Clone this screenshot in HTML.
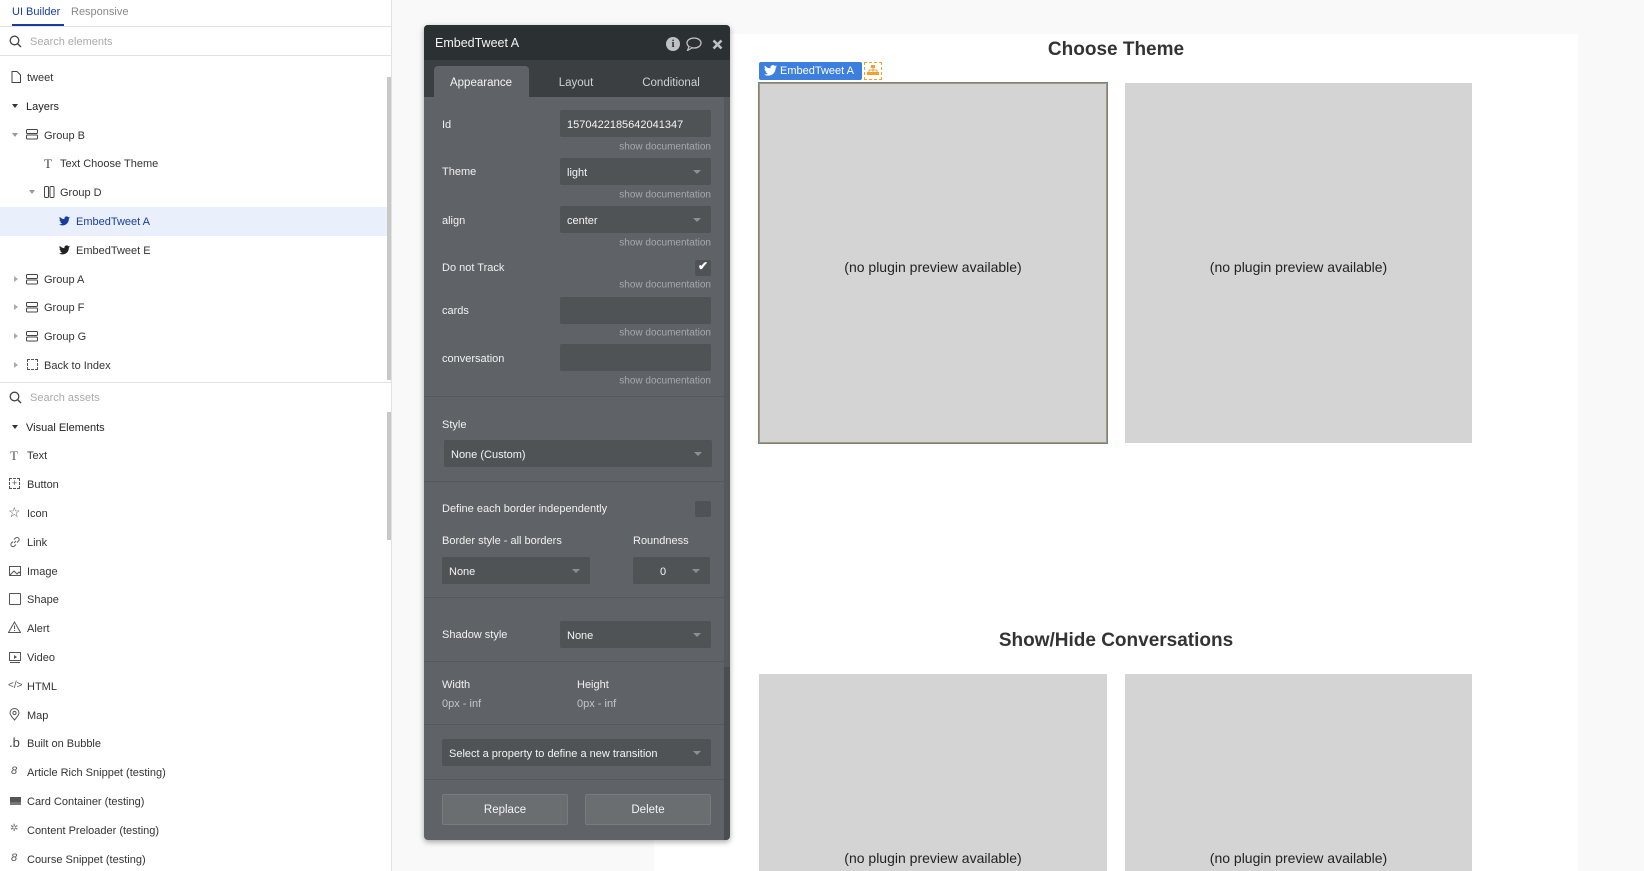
<!DOCTYPE html>
<html><head><meta charset="utf-8"><style>
*{margin:0;padding:0;box-sizing:border-box}
body{width:1644px;height:871px;overflow:hidden;background:#f9f9f9;font-family:"Liberation Sans",sans-serif;position:relative}
.a{position:absolute;white-space:nowrap}
#side{position:absolute;left:0;top:0;width:392px;height:871px;background:#fff;border-right:1px solid #e2e2e2}
.t{font-size:11px;color:#333;transform:translateY(-50%);margin-top:1px}
.pl{font-size:11px;color:#f1f1f1;transform:translateY(-50%);margin-top:1px}
.doc{font-size:10px;color:#a6aaad;transform:translateY(-50%);text-align:right;margin-top:1px}
.in{position:absolute;background:#4f5356;border-radius:2px}
.dd:after{content:"";position:absolute;right:10px;top:50%;margin-top:-2px;border-left:4px solid transparent;border-right:4px solid transparent;border-top:4px solid #8c9093}
.in span{position:absolute;left:7px;top:50%;transform:translateY(-50%);font-size:11px;color:#f4f4f4;white-space:nowrap;margin-top:1px}
.sep{position:absolute;left:424px;width:300px;height:1px;background:#55595c}
.box{position:absolute;background:#d4d4d4;font-family:"Liberation Sans",Arial,sans-serif;font-size:14px;color:#222}
.box span{position:absolute;left:0;right:0;text-align:center;transform:translateY(-50%)}
.h{font-size:19px;font-weight:bold;color:#333;transform:translate(-50%,-50%);margin-top:1px}
</style></head><body>
<div id="side">
 <div class="a" style="left:12px;top:6px;font-size:11px;color:#1a3ca0">UI Builder</div>
 <div class="a" style="left:71px;top:6px;font-size:11px;color:#888">Responsive</div>
 <div class="a" style="left:12px;top:24px;width:52px;height:2px;background:#1a3ca0"></div>
 <div class="a" style="left:0;top:26px;width:392px;height:1px;background:#e2e2e2"></div>
 <svg class="a" style="left:9px;top:35px" width="13" height="13" viewBox="0 0 13 13"><circle cx="5.5" cy="5.5" r="4.3" fill="none" stroke="#444" stroke-width="1.3"/><path d="M8.7 8.7L12 12" stroke="#444" stroke-width="1.4"/></svg>
 <div class="a t" style="left:30px;top:41px;color:#aaa">Search elements</div>
 <div class="a" style="left:0;top:55px;width:392px;height:1px;background:#e2e2e2"></div>
 <div class="a" style="left:387px;top:77px;width:4px;height:303px;background:#c8c8c8"></div>
 <div class="a" style="left:0;top:207px;width:387px;height:29px;background:#e9f0fc"></div>
 <svg class="a" style="left:11px;top:71px" width="10" height="12"><path d="M1 .5h5l3.5 3.5v7.5H1z" fill="none" stroke="#444"/></svg>
 <div class="a t" style="left:27px;top:77px">tweet</div>
 <div class="a" style="left:12px;top:104px;border-left:3.5px solid transparent;border-right:3.5px solid transparent;border-top:4px solid #333"></div>
 <div class="a t" style="left:26px;top:106px;color:#222">Layers</div>
 <div class="a" style="left:12px;top:133px;border-left:3.5px solid transparent;border-right:3.5px solid transparent;border-top:4px solid #999"></div>
 <svg class="a" style="left:26px;top:129px" width="12" height="11"><rect x=".5" y=".5" width="11" height="4" rx="1" fill="none" stroke="#444"/><rect x=".5" y="6" width="11" height="4" rx="1" fill="none" stroke="#444"/></svg>
 <div class="a t" style="left:44px;top:135px">Group B</div>
 <div class="a" style="left:44px;top:156px;font-size:13px;color:#444;font-family:'Liberation Serif',serif">T</div>
 <div class="a t" style="left:60px;top:163px">Text Choose Theme</div>
 <div class="a" style="left:29px;top:190px;border-left:3.5px solid transparent;border-right:3.5px solid transparent;border-top:4px solid #999"></div>
 <svg class="a" style="left:44px;top:186px" width="11" height="12"><rect x=".5" y=".5" width="4" height="11" rx="1" fill="none" stroke="#444"/><rect x="6" y=".5" width="4" height="11" rx="1" fill="none" stroke="#444"/></svg>
 <div class="a t" style="left:60px;top:192px">Group D</div>
 <svg class="a" style="left:59px;top:216px" width="11" height="10" viewBox="0 0 24 20"><path d="M24 2.4c-.9.4-1.8.7-2.8.8 1-.6 1.8-1.6 2.2-2.7-1 .6-2 1-3.1 1.2C19.4.7 18.1 0 16.6 0c-2.7 0-4.900 2.2-4.9 4.9 0 .4 0 .8.1 1.1C7.7 5.8 4.1 3.9 1.7.9c-.4.7-.7 1.6-.7 2.5 0 1.7.9 3.2 2.2 4.1-.8 0-1.6-.2-2.2-.6v.1c0 2.4 1.7 4.4 3.9 4.8-.4.1-.8.2-1.3.2-.3 0-.6 0-.9-.1.6 2 2.4 3.4 4.6 3.4-1.7 1.3-3.8 2.1-6.1 2.1-.4 0-.8 0-1.2-.1 2.2 1.4 4.8 2.200 7.5 2.2 9.1 0 14-7.5 14-14v-.6c1-.7 1.8-1.6 2.5-2.5z" fill="#1a3ca0"/></svg>
 <div class="a t" style="left:76px;top:221px;color:#1a3ca0">EmbedTweet A</div>
 <svg class="a" style="left:59px;top:245px" width="11" height="10" viewBox="0 0 24 20"><path d="M24 2.4c-.9.4-1.8.7-2.8.8 1-.6 1.8-1.6 2.2-2.7-1 .6-2 1-3.1 1.2C19.4.7 18.1 0 16.6 0c-2.7 0-4.9 2.2-4.9 4.9 0 .4 0 .8.1 1.1C7.7 5.8 4.1 3.9 1.7.9c-.4.7-.7 1.6-.7 2.5 0 1.7.9 3.2 2.2 4.1-.8 0-1.6-.2-2.2-.6v.1c0 2.4 1.7 4.4 3.9 4.8-.4.1-.8.2-1.3.2-.3 0-.6 0-.9-.1.6 2 2.4 3.4 4.6 3.4-1.7 1.3-3.8 2.1-6.1 2.1-.4 0-.8 0-1.2-.1 2.2 1.4 4.8 2.2 7.5 2.2 9.1 0 14-7.5 14-14v-.6c1-.7 1.8-1.6 2.5-2.5z" fill="#222"/></svg>
 <div class="a t" style="left:76px;top:250px">EmbedTweet E</div>
 <div class="a" style="left:14px;top:276px;border-top:3.5px solid transparent;border-bottom:3.5px solid transparent;border-left:4px solid #aaa"></div>
 <svg class="a" style="left:26px;top:274px" width="12" height="11"><rect x=".5" y=".5" width="11" height="4" rx="1" fill="none" stroke="#444"/><rect x=".5" y="6" width="11" height="4" rx="1" fill="none" stroke="#444"/></svg>
 <div class="a t" style="left:44px;top:279px">Group A</div>
 <div class="a" style="left:14px;top:304px;border-top:3.5px solid transparent;border-bottom:3.5px solid transparent;border-left:4px solid #aaa"></div>
 <svg class="a" style="left:26px;top:302px" width="12" height="11"><rect x=".5" y=".5" width="11" height="4" rx="1" fill="none" stroke="#444"/><rect x=".5" y="6" width="11" height="4" rx="1" fill="none" stroke="#444"/></svg>
 <div class="a t" style="left:44px;top:307px">Group F</div>
 <div class="a" style="left:14px;top:333px;border-top:3.5px solid transparent;border-bottom:3.5px solid transparent;border-left:4px solid #aaa"></div>
 <svg class="a" style="left:26px;top:331px" width="12" height="11"><rect x=".5" y=".5" width="11" height="4" rx="1" fill="none" stroke="#444"/><rect x=".5" y="6" width="11" height="4" rx="1" fill="none" stroke="#444"/></svg>
 <div class="a t" style="left:44px;top:336px">Group G</div>
 <div class="a" style="left:14px;top:362px;border-top:3.5px solid transparent;border-bottom:3.5px solid transparent;border-left:4px solid #aaa"></div>
 <div class="a" style="left:27px;top:359px;width:11px;height:11px;border:1px dashed #555"></div>
 <div class="a t" style="left:44px;top:365px">Back to Index</div>
 <div class="a" style="left:0;top:382px;width:392px;height:1px;background:#e2e2e2"></div>
 <svg class="a" style="left:9px;top:391px" width="13" height="13" viewBox="0 0 13 13"><circle cx="5.5" cy="5.5" r="4.3" fill="none" stroke="#444" stroke-width="1.3"/><path d="M8.7 8.7L12 12" stroke="#444" stroke-width="1.4"/></svg>
 <div class="a t" style="left:30px;top:397px;color:#aaa">Search assets</div>
 <div class="a" style="left:387px;top:412px;width:4px;height:128px;background:#c8c8c8"></div>
 <div class="a" style="left:12px;top:425px;border-left:3.5px solid transparent;border-right:3.5px solid transparent;border-top:4px solid #333"></div>
 <div class="a t" style="left:26px;top:427px;color:#222">Visual Elements</div>
 <div class="a" style="left:10px;top:448px;font-size:13px;color:#555;font-family:'Liberation Serif',serif">T</div>
 <div class="a t" style="left:27px;top:455px">Text</div>
 <div class="a" style="left:9px;top:478px;width:11px;height:11px;border:1px dashed #555;font-size:9px;line-height:9px;text-align:center;color:#555">+</div>
 <div class="a t" style="left:27px;top:484px">Button</div>
 <div class="a" style="left:8px;top:504px;font-size:14px;color:#555">☆</div>
 <div class="a t" style="left:27px;top:513px">Icon</div>
 <svg class="a" style="left:9px;top:536px" width="12" height="12"><path d="M5 7l2-2M4 5.5L2.5 7a2 2 0 003 3L7 8.5M8 6.5L9.5 5a2 2 0 00-3-3L5 3.5" fill="none" stroke="#666" stroke-width="1.1"/></svg>
 <div class="a t" style="left:27px;top:542px">Link</div>
 <svg class="a" style="left:9px;top:566px" width="12" height="10"><rect x=".5" y=".5" width="11" height="9" fill="none" stroke="#555"/><path d="M1 9l4-4 3 3 2-2 2 2" fill="none" stroke="#555"/></svg>
 <div class="a t" style="left:27px;top:571px">Image</div>
 <div class="a" style="left:9px;top:593px;width:12px;height:12px;border:1px solid #555;border-radius:1px"></div>
 <div class="a t" style="left:27px;top:599px">Shape</div>
 <svg class="a" style="left:8px;top:621px" width="13" height="12"><path d="M6.5 1L12.5 11.5H.5z" fill="none" stroke="#555"/><path d="M6.5 4.5v3.5M6.5 9v1" stroke="#555"/></svg>
 <div class="a t" style="left:27px;top:628px">Alert</div>
 <svg class="a" style="left:9px;top:652px" width="12" height="11"><rect x=".5" y=".5" width="11" height="8" fill="none" stroke="#555"/><path d="M5 3v4l3-2z" fill="#555"/><path d="M1 10.5h10" stroke="#555"/></svg>
 <div class="a t" style="left:27px;top:657px">Video</div>
 <div class="a" style="left:8px;top:680px;font-size:10px;color:#555">&lt;/&gt;</div>
 <div class="a t" style="left:27px;top:686px">HTML</div>
 <svg class="a" style="left:9px;top:708px" width="11" height="13"><path d="M5.5 12C2 8 1 6.5 1 5a4.5 4.5 0 019 0c0 1.5-1 3-4.5 7z" fill="none" stroke="#555"/><circle cx="5.5" cy="5" r="1.6" fill="none" stroke="#555"/></svg>
 <div class="a t" style="left:27px;top:715px">Map</div>
 <div class="a" style="left:9px;top:735px;font-size:13px;color:#444">.b</div>
 <div class="a t" style="left:27px;top:743px">Built on Bubble</div>
 <div class="a" style="left:11px;top:765px;font-size:11px;color:#555;font-style:italic">8</div>
 <div class="a t" style="left:27px;top:772px">Article Rich Snippet (testing)</div>
 <div class="a" style="left:10px;top:797px;width:11px;height:8px;background:#555;border-top:3px solid #555;box-shadow:inset 0 -3px 0 #777"></div>
 <div class="a t" style="left:27px;top:801px">Card Container (testing)</div>
 <div class="a" style="left:10px;top:823px;font-size:10px;color:#777">✲</div>
 <div class="a t" style="left:27px;top:830px">Content Preloader (testing)</div>
 <div class="a" style="left:11px;top:852px;font-size:11px;color:#555;font-style:italic">8</div>
 <div class="a t" style="left:27px;top:859px">Course Snippet (testing)</div>
</div>

<!-- canvas -->
<div class="a" style="left:654px;top:34px;width:924px;height:837px;background:#fff"></div>
<div class="a h" style="left:1116px;top:49px">Choose Theme</div>
<div class="a" style="left:759px;top:62px;width:103px;height:18px;background:#3d7fdf;border-radius:2px"></div>
<svg class="a" style="left:764px;top:65px" width="13" height="11" viewBox="0 0 24 20"><path d="M24 2.4c-.9.4-1.8.7-2.8.8 1-.6 1.8-1.6 2.2-2.7-1 .6-2 1-3.1 1.2C19.4.7 18.1 0 16.6 0c-2.7 0-4.9 2.2-4.9 4.9 0 .4 0 .8.1 1.1C7.7 5.8 4.1 3.9 1.7.9c-.4.7-.7 1.6-.7 2.5 0 1.7.9 3.2 2.2 4.1-.8 0-1.6-.2-2.2-.6v.1c0 2.4 1.7 4.4 3.900 4.8-.4.1-.8.2-1.3.2-.3 0-.6 0-.9-.1.6 2 2.4 3.4 4.6 3.4-1.7 1.3-3.8 2.1-6.1 2.1-.4 0-.8 0-1.2-.1 2.2 1.4 4.8 2.2 7.5 2.2 9.1 0 14-7.5 14-14v-.6c1-.7 1.8-1.6 2.5-2.5z" fill="#fff"/></svg>
<div class="a" style="left:780px;top:63px;font-size:11px;color:#fff;line-height:17px">EmbedTweet A</div>
<div class="a" style="left:864px;top:62px;width:18px;height:18px;border:1px dashed #f0a030"></div>
<svg class="a" style="left:867px;top:65px" width="12" height="11"><rect x="4" y="0" width="4" height="3" fill="#f0a030"/><path d="M6 3v2M2 5h8M2 5v2M10 5v2M6 5v2" stroke="#f0a030"/><rect x="0" y="7" width="4" height="3" fill="#f0a030"/><rect x="4" y="7" width="4" height="3" fill="#f0a030"/><rect x="8" y="7" width="4" height="3" fill="#f0a030"/></svg>
<div class="box" style="left:758px;top:82px;width:350px;height:362px;border:1px solid #3d8fe0;box-shadow:inset 0 0 0 1px #e88a1a"><span style="top:184px">(no plugin preview available)</span></div>
<div class="box" style="left:1125px;top:83px;width:347px;height:360px"><span style="top:184px">(no plugin preview available)</span></div>
<div class="a h" style="left:1116px;top:640px">Show/Hide Conversations</div>
<div class="box" style="left:759px;top:674px;width:348px;height:197px"><span style="top:184px">(no plugin preview available)</span></div>
<div class="box" style="left:1125px;top:674px;width:347px;height:197px"><span style="top:184px">(no plugin preview available)</span></div>

<!-- panel -->
<div class="a" style="left:424px;top:25px;width:306px;height:815px;background:#5f6367;border-radius:4px;box-shadow:0 2px 6px rgba(0,0,0,.35);overflow:hidden">
 <div class="a" style="left:0;top:0;width:306px;height:35px;background:#2b3033"></div>
 <div class="a" style="left:0;top:35px;width:306px;height:37px;background:#3b3f42"></div>
 <div class="a" style="left:300px;top:72px;width:6px;height:743px;background:#4a4e51"></div>
 <div class="a" style="left:300px;top:72px;width:6px;height:570px;background:#55595c"></div>
</div>
<div class="a" style="left:435px;top:35px;font-size:12.5px;color:#f4f4f4;transform:translateY(-50%);margin-top:8px">EmbedTweet A</div>
<div class="a" style="left:666px;top:37px;width:14px;height:14px;border-radius:50%;background:#bfc2c4;color:#2b3033;font-size:11px;font-weight:bold;text-align:center;line-height:14px;font-family:'Liberation Serif',serif">i</div>
<svg class="a" style="left:686px;top:37px" width="16" height="14"><ellipse cx="8" cy="6" rx="7" ry="5" fill="none" stroke="#bfc2c4" stroke-width="1.3"/><path d="M3 9.5L1.5 13.5 6 10.8" fill="#2b3033" stroke="#bfc2c4" stroke-width="1.2"/></svg>
<svg class="a" style="left:712px;top:39px" width="11" height="11"><path d="M1.5 1.5l8 8M9.5 1.5l-8 8" stroke="#bfc2c4" stroke-width="2.6"/></svg>
<div class="a" style="left:434px;top:66px;width:95px;height:31px;background:#5f6367;border-radius:4px 4px 0 0"></div>
<div class="a" style="left:481px;top:83px;font-size:11.5px;color:#f4f4f4;transform:translate(-50%,-50%)">Appearance</div>
<div class="a" style="left:576px;top:83px;font-size:11.5px;color:#cfd1d2;transform:translate(-50%,-50%)">Layout</div>
<div class="a" style="left:671px;top:83px;font-size:11.5px;color:#cfd1d2;transform:translate(-50%,-50%)">Conditional</div>

<div class="a pl" style="left:442px;top:124px">Id</div>
<div class="in" style="left:560px;top:110px;width:151px;height:27px"><span>1570422185642041347</span></div>
<div class="a doc" style="right:933px;top:146px">show documentation</div>
<div class="a pl" style="left:442px;top:171px">Theme</div>
<div class="in dd" style="left:560px;top:158px;width:151px;height:27px"><span>light</span></div>
<div class="a doc" style="right:933px;top:194px">show documentation</div>
<div class="a pl" style="left:442px;top:220px">align</div>
<div class="in dd" style="left:560px;top:206px;width:151px;height:27px"><span>center</span></div>
<div class="a doc" style="right:933px;top:242px">show documentation</div>
<div class="a pl" style="left:442px;top:267px">Do not Track</div>
<div class="in" style="left:695px;top:260px;width:16px;height:16px"></div>
<div class="a" style="left:698px;top:259px;font-size:12px;color:#fff;font-weight:bold">✔</div>
<div class="a doc" style="right:933px;top:284px">show documentation</div>
<div class="a pl" style="left:442px;top:310px">cards</div>
<div class="in" style="left:560px;top:297px;width:151px;height:27px"></div>
<div class="a doc" style="right:933px;top:332px">show documentation</div>
<div class="a pl" style="left:442px;top:358px">conversation</div>
<div class="in" style="left:560px;top:344px;width:151px;height:27px"></div>
<div class="a doc" style="right:933px;top:380px">show documentation</div>
<div class="sep" style="top:396px"></div>
<div class="a pl" style="left:442px;top:424px">Style</div>
<div class="in dd" style="left:444px;top:440px;width:268px;height:27px"><span>None (Custom)</span></div>
<div class="sep" style="top:481px"></div>
<div class="a pl" style="left:442px;top:508px">Define each border independently</div>
<div class="in" style="left:695px;top:501px;width:16px;height:16px"></div>
<div class="a pl" style="left:442px;top:540px">Border style - all borders</div>
<div class="a pl" style="left:633px;top:540px">Roundness</div>
<div class="in dd" style="left:442px;top:557px;width:148px;height:27px"><span>None</span></div>
<div class="in dd" style="left:633px;top:557px;width:77px;height:27px"><span style="left:27px">0</span></div>
<div class="sep" style="top:597px"></div>
<div class="a pl" style="left:442px;top:634px">Shadow style</div>
<div class="in dd" style="left:560px;top:621px;width:151px;height:27px"><span>None</span></div>
<div class="sep" style="top:661px"></div>
<div class="a pl" style="left:442px;top:684px">Width</div>
<div class="a pl" style="left:577px;top:684px">Height</div>
<div class="a pl" style="left:442px;top:703px;color:#c4c7c9">0px - inf</div>
<div class="a pl" style="left:577px;top:703px;color:#c4c7c9">0px - inf</div>
<div class="sep" style="top:724px"></div>
<div class="in dd" style="left:442px;top:739px;width:269px;height:27px"><span>Select a property to define a new transition</span></div>
<div class="sep" style="top:779px"></div>
<div class="a" style="left:442px;top:794px;width:126px;height:31px;background:#6a6e71;border:1px solid #777b7e;border-radius:2px;color:#f4f4f4;font-size:11.5px;text-align:center;line-height:30px">Replace</div>
<div class="a" style="left:585px;top:794px;width:126px;height:31px;background:#6a6e71;border:1px solid #777b7e;border-radius:2px;color:#f4f4f4;font-size:11.5px;text-align:center;line-height:30px">Delete</div>
</body></html>
